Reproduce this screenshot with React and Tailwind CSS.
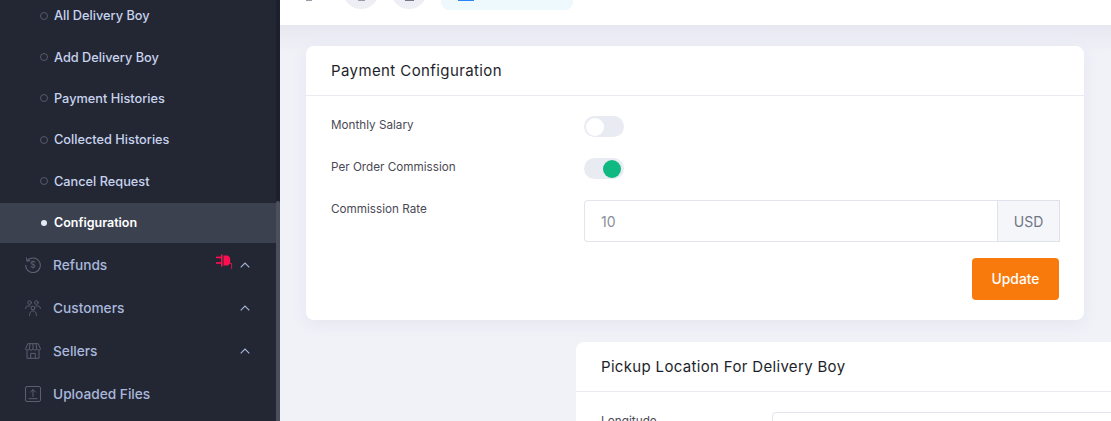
import React from "react";

const font = { fontFamily: '"Inter", "Liberation Sans", sans-serif' };

const subItems = ["All Delivery Boy", "Add Delivery Boy", "Payment Histories", "Collected Histories", "Cancel Request"];

function RefundIcon() {
  return (
    <svg width="16" height="16" viewBox="0 0 16 16" fill="none" stroke="#5b6070" strokeWidth="1.1" strokeLinecap="round" className="shrink-0">
      <path d="M1.6 0.9 L2 4 L5 3.7" />
      <path d="M2.2 3.8 A7.3 7.3 0 1 1 0.7 8.4" />
      <text x="8" y="11.2" textAnchor="middle" fontSize="9" fill="#5b6070" stroke="none" fontFamily="Inter, sans-serif">$</text>
    </svg>
  );
}
function CustomersIcon() {
  return (
    <svg width="16" height="16" viewBox="0 0 16 16" fill="none" stroke="#5b6070" strokeWidth="1" strokeLinecap="round" className="shrink-0">
      <circle cx="4.6" cy="2.6" r="1.8" />
      <circle cx="11.4" cy="2.6" r="1.8" />
      <circle cx="8" cy="8" r="1.9" />
      <path d="M0.5 8.5 C1 6 3 5.5 5 6" />
      <path d="M15.5 8.5 C15 6 13 5.5 11 6" />
      <path d="M4.6 15.5 C4.6 12 6 11 8 11 C10 11 11.4 12 11.4 15.5" />
    </svg>
  );
}
function StoreIcon() {
  return (
    <svg width="16" height="16" viewBox="0 0 16 16" fill="none" stroke="#5b6070" strokeWidth="1" strokeLinejoin="round" className="shrink-0">
      <path d="M2.8 0.7 H13.2 L15.5 5.8 C15.5 7.6 12.9 7.6 11.7 6 C11 7.6 9 7.6 8 6 C7 7.6 5 7.6 4.3 6 C3.1 7.6 0.5 7.6 0.5 5.8 Z" />
      <path d="M5 0.7 L4.3 6 M8 0.7 V6 M11 0.7 L11.7 6" />
      <path d="M2 7.6 V15.3 H14 V7.6" />
      <path d="M5.7 15.3 V10.4 H10.3 V15.3" />
    </svg>
  );
}
function UploadIcon() {
  return (
    <svg width="16" height="16" viewBox="0 0 16 16" fill="none" stroke="#5b6070" strokeWidth="1" strokeLinecap="round" strokeLinejoin="round" className="shrink-0">
      <rect x="0.5" y="0.5" width="15" height="15" rx="1.5" />
      <path d="M8 10.5 V3.8 M5.6 6 L8 3.6 L10.4 6" />
      <path d="M4 12.7 H12" />
    </svg>
  );
}
function Plug() {
  return (
    <svg width="17" height="16" viewBox="0 0 17 16" fill="#ff0f4f" className="shrink-0">
      <rect x="0" y="2.6" width="5" height="1.6" />
      <rect x="0" y="8.2" width="5" height="1.6" />
      <rect x="5" y="0.5" width="1.5" height="12" />
      <path d="M7.5 1.5 H10.5 C13.5 1.5 14.2 4 14.2 6.5 C14.2 9 13.5 11.5 10.5 11.5 H7.5 Z" />
      <path d="M13 9.5 H15.6 V15" fill="none" stroke="#ff0f4f" strokeWidth="0.8" />
    </svg>
  );
}
function Chevron() {
  return (
    <svg width="10" height="6" viewBox="0 0 10 6" fill="none" stroke="#a9b8dc" strokeWidth="1.1" className="shrink-0">
      <path d="M0.7 5.3 L5 1 L9.3 5.3" />
    </svg>
  );
}

function MainItem({ icon, label, chevron, plug }) {
  return (
    <div className="relative flex h-[43px] items-center pl-[25px] pr-[26px]">
      {icon}
      <span className="ml-[12px] flex-1 text-[13.7px] font-medium text-[#a9b8dc]">{label}</span>
      {plug && (
        <span className="absolute left-[216px] top-[10px]">
          <Plug />
        </span>
      )}
      {chevron && <Chevron />}
    </div>
  );
}

function Toggle({ on }) {
  return (
    <div className={`flex h-[21px] w-[40px] shrink-0 items-center rounded-full bg-[#e9ebf2] ${on ? "justify-end pr-[3px]" : "justify-start pl-[2px]"}`}>
      <div className={`h-[18px] w-[18px] rounded-full ${on ? "bg-[#10b981]" : "bg-white"}`} />
    </div>
  );
}

function Row({ label, children, className = "" }) {
  return (
    <div className={`flex items-start ${className}`}>
      <div className="w-[253px] shrink-0 text-[11.7px] leading-[18px] text-[#4a4a55]">{label}</div>
      {children}
    </div>
  );
}

function RoundButton({ bar }) {
  return (
    <div className="flex h-[36px] w-[36px] shrink-0 items-start justify-center rounded-full bg-[#eeeff5] pt-[27px]">
      <div className={bar} />
    </div>
  );
}

export default function App() {
  return (
    <div style={font} className="flex h-[421px] w-[1111px] overflow-hidden bg-[#f1f2f8]">
      <aside className="relative h-full w-[280px] shrink-0 overflow-hidden bg-[#232734]">
        <div className="absolute right-0 top-0 h-full w-[4px] bg-[#1d202c]" />
        <div className="absolute right-0 top-[201px] h-full w-[4px] rounded-t-[2px] bg-[#4b4e5c]" />
        <div className="-mt-[5px] pr-[4px]">
          {subItems.map((s) => (
            <div key={s} className="flex h-[41.4px] items-center pl-[40px]">
              <span className="h-[8px] w-[8px] rounded-full border border-[#555a6a]" />
              <span className="ml-[6px] text-[12.75px] font-medium text-[#c8d3ee]">{s}</span>
            </div>
          ))}
          <div className="mt-[1px] flex h-[40px] items-center bg-[#3c4150] pl-[41px]">
            <span className="h-[6px] w-[6px] rounded-full bg-[#e7e9f2]" />
            <span className="ml-[7px] text-[12.5px] font-semibold text-white">Configuration</span>
          </div>
          <div className="pt-[1px]">
            <MainItem icon={<RefundIcon />} label="Refunds" chevron plug />
            <MainItem icon={<CustomersIcon />} label="Customers" chevron />
            <MainItem icon={<StoreIcon />} label="Sellers" chevron />
            <MainItem icon={<UploadIcon />} label="Uploaded Files" />
          </div>
        </div>
      </aside>

      <main className="min-w-0 flex-1 overflow-hidden">
        <header className="relative z-10 flex h-[25px] items-end overflow-hidden bg-white pb-[16px] pl-[26px]">
          <div className="mb-[8px] h-[1px] w-[6px] bg-[#9a9ca8]" />
          <div className="ml-[31px]">
            <RoundButton bar="h-[1px] w-[7px] bg-[#9a9aa8]" />
          </div>
          <div className="ml-[12px]">
            <RoundButton bar="h-[1px] w-[9px] bg-[#77778a]" />
          </div>
          <div className="-mb-[1px] ml-[14px] flex h-[40px] w-[132px] shrink-0 items-start rounded-[8px] bg-[#eef9fd] pl-[17px] pt-[30px]">
            <div className="h-[1px] w-[16px] bg-[#2684ff]" />
          </div>
        </header>

        <div className="relative pt-[21px]">
          <div className="pointer-events-none absolute left-0 right-0 top-0 h-[28px] bg-gradient-to-b from-[#e7e7f1] to-transparent" />
          <section className="relative ml-[26px] h-[274px] w-[778px] rounded-[8px] bg-white shadow-[0_4px_16px_rgba(180,185,210,0.2)]">
            <div className="flex h-[50px] items-center border-b border-[#e9ebf0] px-[25px] pt-[2px]">
              <h2 className="text-[15px] font-normal tracking-[0.4px] text-[#1d1f2b]">Payment Configuration</h2>
            </div>
            <div className="px-[25px] pt-[20px]">
              <Row label="Monthly Salary" className="h-[42px]">
                <Toggle />
              </Row>
              <Row label="Per Order Commission" className="h-[42px]">
                <Toggle on />
              </Row>
              <Row label="Commission Rate" className="h-[58px]">
                <div className="flex h-[42px] w-[476px] shrink-0">
                  <div className="flex flex-1 items-center rounded-l-[4px] border border-r-0 border-[#e2e5ec] pl-[16px] text-[14px] text-[#8b8f9c]">10</div>
                  <div className="flex w-[63px] shrink-0 items-center justify-center border border-[#dfe2ea] bg-[#f5f6f9] text-[14px] text-[#6f7787]">USD</div>
                </div>
              </Row>
              <div className="flex justify-end">
                <button className="h-[42px] w-[87px] rounded-[4px] bg-[#f97a0c] text-[13.8px] font-medium text-white">Update</button>
              </div>
            </div>
          </section>

          <section className="relative ml-[296px] mt-[22px] h-[200px] w-[600px] rounded-l-[8px] bg-white">
            <div className="flex h-[50px] items-center border-b border-[#e9ebf0] pl-[25px] pt-[2px]">
              <h2 className="text-[15px] font-normal tracking-[0.33px] text-[#1d1f2b]">Pickup Location For Delivery Boy</h2>
            </div>
            <div className="flex items-start pl-[25px] pt-[20px]">
              <div className="w-[171px] shrink-0 text-[11.8px] leading-[18px] text-[#4a4a55]">Longitude</div>
              <div className="h-[42px] flex-1 rounded-l-[4px] border border-[#e2e5ec]" />
            </div>
          </section>
        </div>
      </main>
    </div>
  );
}
